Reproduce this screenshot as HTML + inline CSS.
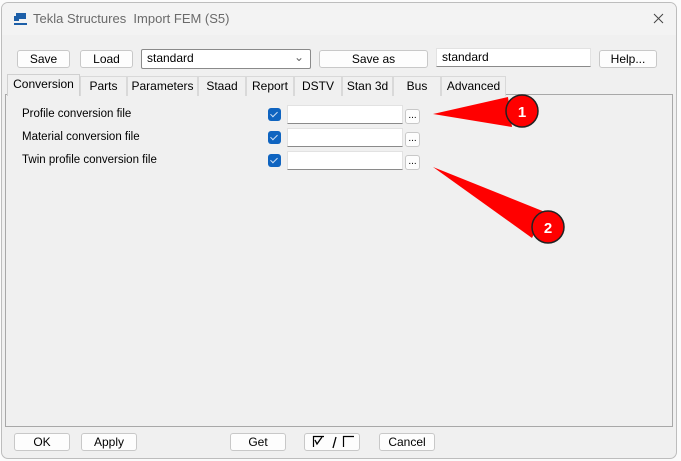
<!DOCTYPE html>
<html><head><style>
*{box-sizing:border-box;margin:0;padding:0}
body{width:681px;height:461px;background:#fbfbfb;position:relative;overflow:hidden;font-family:"Liberation Sans",sans-serif;font-size:12px;color:#000}
.win{position:absolute;left:1px;top:2px;width:676px;height:457px;background:#f0f0f0;border:1px solid #bdbdbd;border-radius:7px;overflow:hidden}
.title{position:absolute;left:0;top:0;width:100%;height:32px;background:#f3f3f3}
.title span{position:absolute;left:31px;top:8px;font-size:13px;color:#6a6a6a}
.btn{position:absolute;height:18px;background:#fdfdfd;border:1px solid #c8c8c8;border-radius:3px;text-align:center;line-height:16px;font-size:12px}
.inp{position:absolute;height:19px;background:#fff;border:1px solid #e2e2e2;border-bottom:1px solid #8a8a8a;font-size:12px;padding-left:5px;line-height:17px}
.tab{position:absolute;top:73px;height:20px;border:1px solid #d9d9d9;border-bottom:none;background:#f0f0f0;text-align:center;line-height:19px;font-size:12px}
.panel{position:absolute;left:3px;top:91px;width:668px;height:333px;border:1px solid #a8a8a8;background:#f0f0f0}
.lbl{position:absolute;left:20px;font-size:11.5px}
.cb{position:absolute;left:266px;width:13px;height:13px;background:#0f64c0;border-radius:3px}
.cb:after{content:"";position:absolute;left:4px;top:2px;width:3px;height:6px;border:solid #cfe0f5;border-width:0 1px 1px 0;transform:rotate(45deg)}
.dots{position:absolute;left:403px;width:15px;height:15px;background:#fdfdfd;border:1px solid #c8c8c8;border-radius:3px;font-size:10px;line-height:11px;text-align:center}
</style></head><body>
<div class="win">
<div class="title">
<svg style="position:absolute;left:11px;top:9px" width="15" height="14"><rect x="3" y="1" width="10" height="6" fill="#1d5fa8"/><rect x="1" y="4" width="5" height="5" fill="#1d5fa8"/><rect x="1" y="11" width="13" height="2" fill="#1d5fa8"/></svg>
<span>Tekla Structures&nbsp; Import FEM (S5)</span>
<svg style="position:absolute;left:651px;top:10px" width="11" height="11"><path d="M1 1L10 10M10 1L1 10" stroke="#444" stroke-width="1"/></svg>
</div>
<div class="btn" style="left:15px;top:47px;width:53px">Save</div>
<div class="btn" style="left:78px;top:47px;width:53px">Load</div>
<div class="inp" style="left:139px;top:46px;width:170px;height:20px;border:1px solid #8a8a8a;border-radius:2px">standard<span style="position:absolute;right:6px;top:-1px;color:#666">&#8964;</span></div>
<div class="btn" style="left:317px;top:47px;width:109px">Save as</div>
<div class="inp" style="left:434px;top:45px;width:155px">standard</div>
<div class="btn" style="left:597px;top:47px;width:58px">Help...</div>
<div class="panel"></div>
<div class="tab" style="left:78px;width:47px">Parts</div>
<div class="tab" style="left:125px;width:71px">Parameters</div>
<div class="tab" style="left:196px;width:48px">Staad</div>
<div class="tab" style="left:244px;width:48px">Report</div>
<div class="tab" style="left:292px;width:48px">DSTV</div>
<div class="tab" style="left:340px;width:51px">Stan 3d</div>
<div class="tab" style="left:391px;width:48px">Bus</div>
<div class="tab" style="left:439px;width:65px">Advanced</div>
<div class="tab" style="left:5px;top:71px;width:73px;height:22px;border-color:#d0d0d0;background:#f0f0f0;z-index:2">Conversion</div>
<div class="lbl" style="top:105px">Profile conversion file</div>
<div class="lbl" style="top:128px">Material conversion file</div>
<div class="lbl" style="top:151px">Twin profile conversion file</div>
<div class="cb" style="top:105px"></div><div class="cb" style="top:128px"></div><div class="cb" style="top:151px"></div>
<div class="inp" style="left:285px;top:102px;width:116px"></div>
<div class="inp" style="left:285px;top:125px;width:116px"></div>
<div class="inp" style="left:285px;top:148px;width:116px"></div>
<div class="dots" style="top:106px">...</div><div class="dots" style="top:129px">...</div><div class="dots" style="top:152px">...</div>
<div class="btn" style="left:12px;top:430px;width:56px">OK</div>
<div class="btn" style="left:79px;top:430px;width:56px">Apply</div>
<div class="btn" style="left:228px;top:430px;width:56px">Get</div>
<div class="btn" style="left:302px;top:430px;width:56px"><svg width="54" height="16"><path d="M8.5 13V2.5H19M8.5 2.5" stroke="#000" stroke-width="1.2" fill="none"/><path d="M10 6L12 10L17 3" stroke="#000" stroke-width="1.3" fill="none"/><path d="M28 14L31 3" stroke="#000" stroke-width="1.3"/><path d="M38.5 13V2.5H49" stroke="#000" stroke-width="1.2" fill="none"/></svg></div>
<div class="btn" style="left:377px;top:430px;width:56px">Cancel</div>
</div>
<svg style="position:absolute;left:0;top:0" width="681" height="461">
<polygon points="433,114 508,97 512,127" fill="#f00"/>
<circle cx="522" cy="111" r="16" fill="#f00" stroke="#222" stroke-width="1.5"/>
<text x="522" y="117" font-family="Liberation Sans" font-weight="bold" font-size="15" fill="#fff" text-anchor="middle">1</text>
<polygon points="433,167 545,212 532,238" fill="#f00"/>
<circle cx="548" cy="227" r="16" fill="#f00" stroke="#222" stroke-width="1.5"/>
<text x="548" y="233" font-family="Liberation Sans" font-weight="bold" font-size="15" fill="#fff" text-anchor="middle">2</text>
</svg>
</body></html>
